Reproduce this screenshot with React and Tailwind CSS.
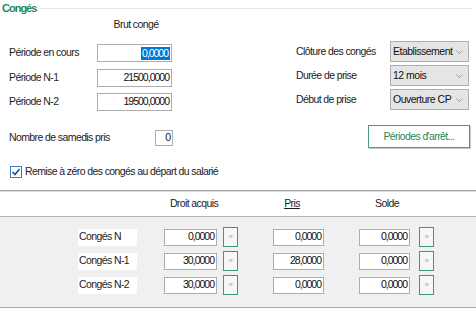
import React from 'react';

const FONT = { fontFamily: '"Liberation Sans", Arial, sans-serif' };

function Chevron() {
  return (
    <svg width="7" height="4" viewBox="0 0 7 4" className="shrink-0">
      <path d="M0.5 0.5 L3.5 3.5 L6.5 0.5" fill="none" stroke="#9a9a9a" strokeWidth="1" />
    </svg>
  );
}

function Select({ value }) {
  return (
    <div className="flex items-center justify-between w-[79px] h-[21px] border border-[#adadad] bg-[#e5e5e5] pl-[2px] pr-[5px] text-[#111] tracking-[-0.5px]">
      <span className="leading-none whitespace-nowrap">{value}</span>
      <Chevron />
    </div>
  );
}

function NumBox({ value, w }) {
  return (
    <div className={`${w} border border-[#abadb3] bg-white flex items-center justify-end pr-[2px] text-[#111] tracking-[-1px]`}>
      {value}
    </div>
  );
}

function Arrow({ className = '' }) {
  return (
    <div className={`w-[15px] h-[20px] border border-[#3f9a72] bg-[#f7f7f7] flex items-center justify-center text-[8px] text-[#a8a8a8] ${className}`}>
      »
    </div>
  );
}

const ROWS = [
  { label: 'Congés N',   droit: '0,0000',  pris: '0,0000',  solde: '0,0000' },
  { label: 'Congés N-1', droit: '30,0000', pris: '28,0000', solde: '0,0000' },
  { label: 'Congés N-2', droit: '30,0000', pris: '0,0000',  solde: '0,0000' },
];

export default function App() {
  return (
    <div className="w-[476px] h-[312px] bg-white overflow-hidden text-[10.5px] tracking-[-0.6px] text-[#1c1c1c] whitespace-nowrap" style={FONT}>
      {/* title */}
      <div className="flex items-center h-[16px]">
        <span className="pl-[2px] font-bold text-[#23885a] text-[11px] tracking-[-1px]">Congés</span>
        <div className="flex-1 h-px bg-[#e6e6e6] ml-[3px] mr-[4px]" />
      </div>

      {/* upper form */}
      <div className="flex">
        <div className="w-[296px] pl-[9px]">
          <div className="ml-[88px] w-[78px] h-[16px] leading-[16px] text-center">Brut congé</div>
          <div className="flex items-center h-[18px] mt-[12px]">
            <span className="w-[88px]">Période en cours</span>
            <div className="w-[75px] h-[18px] border border-[#abadb3] bg-white flex items-center justify-end pr-[1px] tracking-[-1px]">
              <span className="bg-[#0078d7] text-white leading-[13px] pl-[1px] pr-[2px]">0,0000</span>
            </div>
          </div>
          <div className="flex items-center h-[18px] mt-[7px]">
            <span className="w-[88px]">Période N-1</span>
            <NumBox value="21500,0000" w="w-[75px] h-[18px]" />
          </div>
          <div className="flex items-center h-[18px] mt-[6px]">
            <span className="w-[88px]">Période N-2</span>
            <NumBox value="19500,0000" w="w-[75px] h-[18px]" />
          </div>
          <div className="flex items-center h-[16px] mt-[19px]">
            <span className="w-[146px]">Nombre de samedis pris</span>
            <NumBox value="0" w="w-[18px] h-[16px]" />
          </div>
        </div>

        <div className="flex-1 pt-[25px]">
          {[
            ['Clôture des congés', 'Etablissement'],
            ['Durée de prise', '12 mois'],
            ['Début de prise', 'Ouverture CP'],
          ].map(([l, v], i) => (
            <div key={l} className={`flex items-center h-[21px] ${i ? 'mt-[3px]' : ''}`}>
              <span className="w-[94px]">{l}</span>
              <Select value={v} />
            </div>
          ))}
          <div className="ml-[72px] mt-[15px] w-[102px] h-[23px] border border-[#4a9c78] border-b-[#6f8f80] bg-white flex items-center justify-center text-[#23885a] shadow-[1px_1px_0_#c8c8c8]">
            Périodes d'arrêt...
          </div>
        </div>
      </div>

      {/* checkbox */}
      <div className="flex items-center h-[16px] mt-[16px] pl-[10px]">
        <svg width="12" height="12" viewBox="0 0 12 12" className="shrink-0">
          <rect x="0.5" y="0.5" width="11" height="11" fill="#fff" stroke="#3c7fc1" />
          <path d="M2.5 6 L5 8.5 L9.5 3" fill="none" stroke="#1f4f8a" strokeWidth="1.6" />
        </svg>
        <span className="ml-[3px]">Remise à zéro des congés au départ du salarié</span>
      </div>

      {/* separator */}
      <div className="mt-[10px] h-[2px] border-t border-[#a0a0a0] border-b border-b-[#dcdcdc]" />

      {/* table header */}
      <div className="flex items-center h-[25px] border-b border-[#b4b4b4]">
        <span className="ml-[164px] w-[60px] text-center">Droit acquis</span>
        <span className="ml-[49px] w-[38px] text-center underline">Pris</span>
        <span className="ml-[48px] w-[56px] text-center">Solde</span>
      </div>

      {/* table body */}
      <div className="bg-[#f0f0f0] h-[91px] pt-[10px] flex flex-col gap-[4px] border-b border-[#a8a8a8]">
        {ROWS.map(r => (
          <div key={r.label} className="flex items-center h-[20px]">
            <div className="ml-[78px] w-[59px] h-[17px] bg-white flex items-center pl-[1px]">{r.label}</div>
            <div className="ml-[27px]"><NumBox value={r.droit} w="w-[53px] h-[17px]" /></div>
            <Arrow className="ml-[6px]" />
            <div className="ml-[35px]"><NumBox value={r.pris} w="w-[51px] h-[17px]" /></div>
            <div className="ml-[35px]"><NumBox value={r.solde} w="w-[51px] h-[17px]" /></div>
            <Arrow className="ml-[9px]" />
          </div>
        ))}
      </div>
    </div>
  );
}
